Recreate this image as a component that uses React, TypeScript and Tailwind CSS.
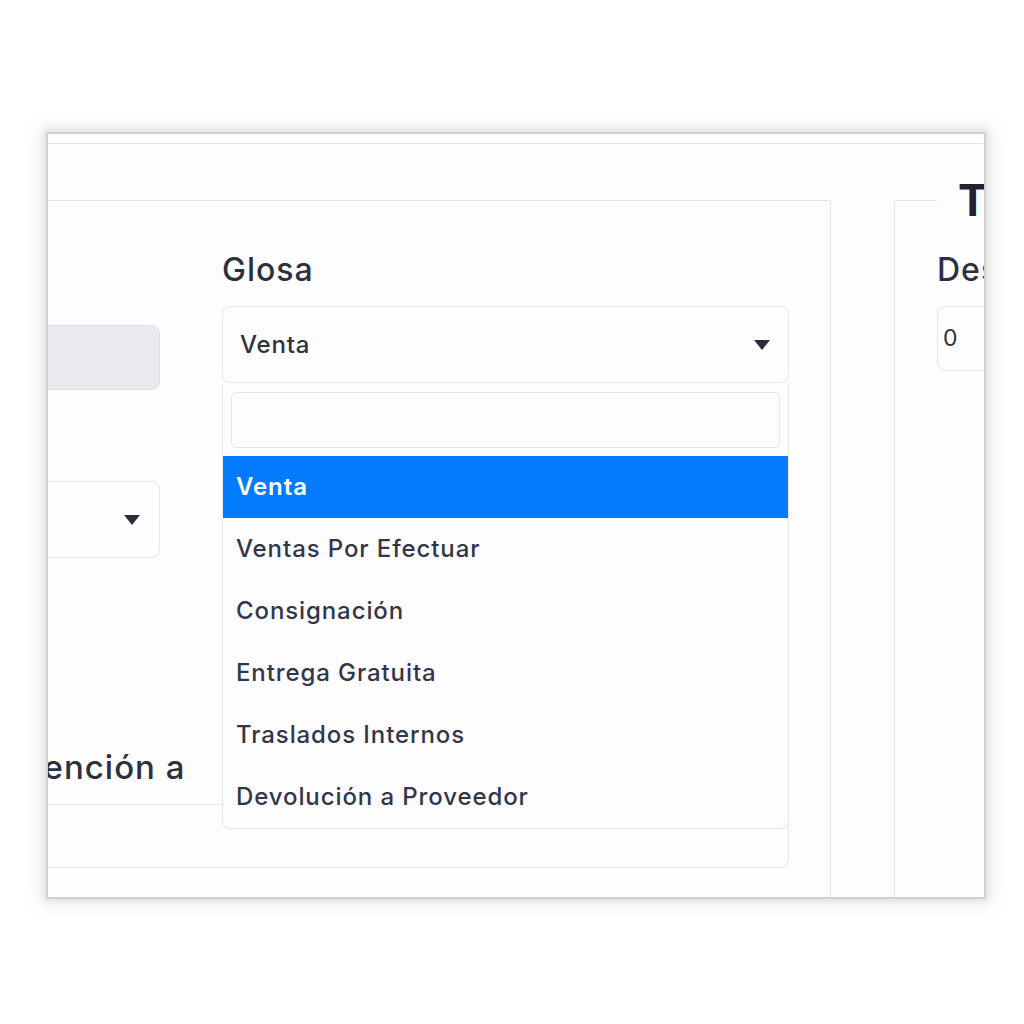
import React from "react";

const GLOSAS = [
  "Venta",
  "Ventas Por Efectuar",
  "Consignación",
  "Entrega Gratuita",
  "Traslados Internos",
  "Devolución a Proveedor",
];

function Caret() {
  return (
    <svg width="16" height="10" viewBox="0 0 16 10" className="shrink-0">
      <polygon points="0,0 16,0 8,10" fill="#2a2d3b" />
    </svg>
  );
}

export default function App() {
  const selected = "Venta";

  return (
    <div
      className="w-[1024px] h-[1024px] bg-white overflow-hidden pt-[134px] pl-[48px]"
      style={{ fontFamily: "Inter, 'Noto Sans', sans-serif" }}
    >
      {/* Cropped form window */}
      <div className="w-[936px] h-[763px] bg-[#fdfdfe] overflow-hidden shadow-[0_0_0_2px_rgba(0,0,0,0.08),0_0_6px_5px_rgba(0,0,0,0.08),0_0_16px_10px_rgba(0,0,0,0.05)]">
        <div className="h-[9px]" />
        <div className="border-b border-[#e6e7ec]" />

        <div className="flex items-start text-[#2d303e]">
          {/* Left fieldset */}
          <div className="shrink-0 mt-[56px] ml-[-243px] w-[1026px] h-[800px] border border-[#e4e5ea] pt-[49px] pl-[42px] pr-[41px]">
            <div className="grid grid-cols-[312px_567px] gap-x-[62px] items-start">
              {/* Column 1 */}
              <div className="flex flex-col">
                <div className="h-10" />
                <div className="mt-[35px] h-[65px] rounded-lg bg-[#e9eaee] border border-[#dfe0e6]" />
                <div className="mt-[91px] h-[77px] rounded-lg border border-[#e6e7ec] bg-[#fdfdfe] flex items-center justify-end pr-[19px]">
                  <Caret />
                </div>
              </div>

              {/* Column 2: Glosa */}
              <div className="flex flex-col">
                <label className="h-10 leading-10 text-[32px] font-medium tracking-[1px]">Glosa</label>
                <div className="relative mt-4">
                  <div className="h-[77px] rounded-lg border border-[#e6e7ec] bg-[#fdfdfe] flex items-center justify-between pl-[17px] pr-[18px]">
                    <span className="text-[24px] font-medium tracking-[0.8px] text-[#2f3241]">{selected}</span>
                    <Caret />
                  </div>

                  {/* Open dropdown */}
                  <div className="absolute left-0 right-0 top-full z-10 border border-t-0 border-[#e6e7ec] rounded-b-lg bg-[#fdfdfe]">
                    <div className="px-2 pt-[9px] pb-[8px]">
                      <div className="h-[56px] rounded-md border border-[#e4e5ea] bg-[#fdfdfe]" />
                    </div>
                    <ul>
                      {GLOSAS.map((g) => (
                        <li
                          key={g}
                          className={
                            g === selected
                              ? "h-[62px] flex items-center pl-[13px] bg-[#037bfe] text-white text-[24px] font-semibold tracking-[0.9px]"
                              : "h-[62px] flex items-center pl-[13px] text-[#33364a] text-[24px] font-medium tracking-[0.9px]"
                          }
                        >
                          {g}
                        </li>
                      ))}
                    </ul>
                  </div>
                </div>
              </div>
            </div>

            {/* Full width row */}
            <div className="mt-[189px]">
              <label className="block h-10 leading-10 text-[33px] font-medium tracking-[1px] pl-[160px] whitespace-nowrap">
                Atención a
              </label>
              <div className="mt-[17px] h-[64px] rounded-lg border border-[#e6e7ec] bg-[#fdfdfe]" />
            </div>
          </div>

          {/* Right fieldset */}
          <fieldset className="shrink-0 min-w-0 mt-[30px] ml-[63px] w-[400px] h-[800px] border border-[#e4e5ea] px-[42px] pt-[24px]">
            <legend className="px-[21px] text-[44px] leading-[52px] font-bold text-[#1f2232]">Totales</legend>
            <label className="block h-10 leading-10 text-[32px] font-medium tracking-[1px]">Descuento</label>
            <div className="mt-4 h-[65px] rounded-lg border border-[#e6e7ec] bg-[#fdfdfe] flex items-center pl-[5px] text-[23px] text-[#2f3241]">
              0
            </div>
          </fieldset>
        </div>
      </div>
    </div>
  );
}
